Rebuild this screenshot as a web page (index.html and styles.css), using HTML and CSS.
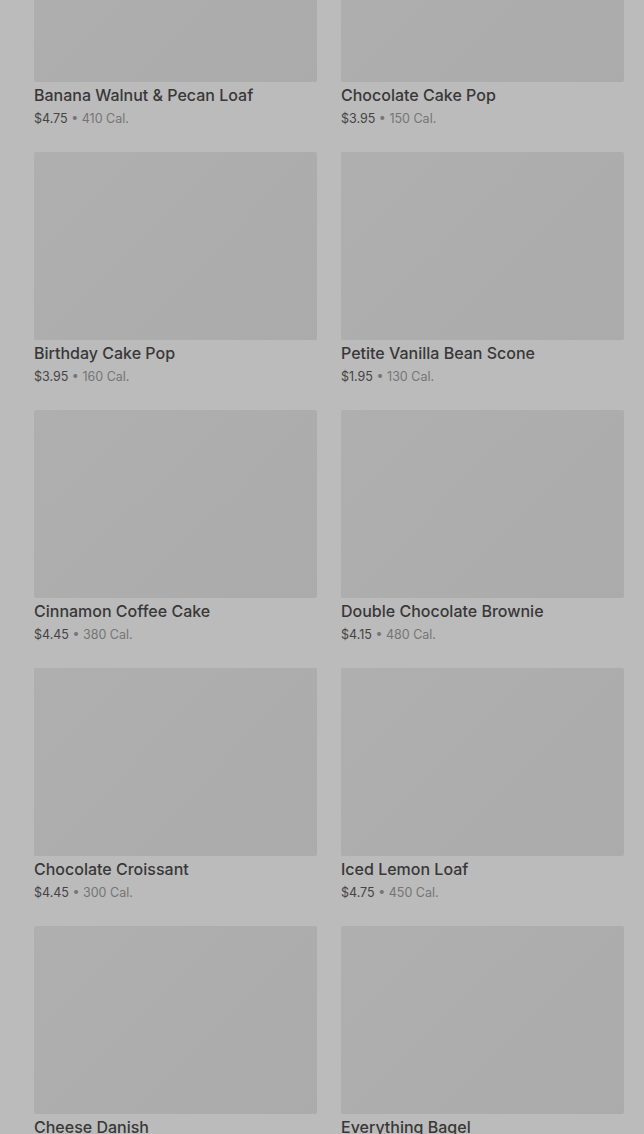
FILE: index.html
```html
<!DOCTYPE html>
<html lang="en">
<head>
<meta charset="utf-8">
<title>Bakery</title>
<link rel="stylesheet" href="styles.css">
</head>
<body>
<main class="page">
  <div class="grid">
    <article class="card"><div class="thumb"></div><h3 class="name">Banana Walnut &amp; Pecan Loaf</h3><p class="meta"><span class="price">$4.75</span> • 410 Cal.</p></article>
    <article class="card"><div class="thumb"></div><h3 class="name">Chocolate Cake Pop</h3><p class="meta"><span class="price">$3.95</span> • 150 Cal.</p></article>
    <article class="card"><div class="thumb"></div><h3 class="name">Birthday Cake Pop</h3><p class="meta"><span class="price">$3.95</span> • 160 Cal.</p></article>
    <article class="card"><div class="thumb"></div><h3 class="name">Petite Vanilla Bean Scone</h3><p class="meta"><span class="price">$1.95</span> • 130 Cal.</p></article>
    <article class="card"><div class="thumb"></div><h3 class="name">Cinnamon Coffee Cake</h3><p class="meta"><span class="price">$4.45</span> • 380 Cal.</p></article>
    <article class="card"><div class="thumb"></div><h3 class="name">Double Chocolate Brownie</h3><p class="meta"><span class="price">$4.15</span> • 480 Cal.</p></article>
    <article class="card"><div class="thumb"></div><h3 class="name">Chocolate Croissant</h3><p class="meta"><span class="price">$4.45</span> • 300 Cal.</p></article>
    <article class="card"><div class="thumb"></div><h3 class="name">Iced Lemon Loaf</h3><p class="meta"><span class="price">$4.75</span> • 450 Cal.</p></article>
    <article class="card"><div class="thumb"></div><h3 class="name">Cheese Danish</h3><p class="meta"><span class="price">$3.75</span> • 290 Cal.</p></article>
    <article class="card"><div class="thumb"></div><h3 class="name">Everything Bagel</h3><p class="meta"><span class="price">$2.45</span> • 290 Cal.</p></article>
  </div>
</main>
</body>
</html>
```
FILE: styles.css
```css
html, body {
  margin: 0;
  padding: 0;
  background: #bbbbbb;
  overflow: hidden;
}
body {
  font-family: Inter, "Noto Sans", sans-serif;
  color: #363636;
}
.page {
  padding: 0 20px 0 34px;
}
.grid {
  margin-top: -106px;
  display: grid;
  grid-template-columns: 283px 283px;
  column-gap: 24px;
  row-gap: 24px;
}
.card {
  display: flex;
  flex-direction: column;
}
.thumb {
  height: 188px;
  border-radius: 2px;
  background: linear-gradient(135deg, #afafaf 0%, #ababab 100%);
}
.name {
  margin: 3px 0 0;
  font-size: 16px;
  line-height: 20px;
  font-weight: 500;
  color: #383838;
  letter-spacing: 0;
}
.meta {
  margin: 5px 0 0;
  font-size: 12.5px;
  line-height: 18px;
  color: #757575;
}
.price {
  color: #444444;
}
```
